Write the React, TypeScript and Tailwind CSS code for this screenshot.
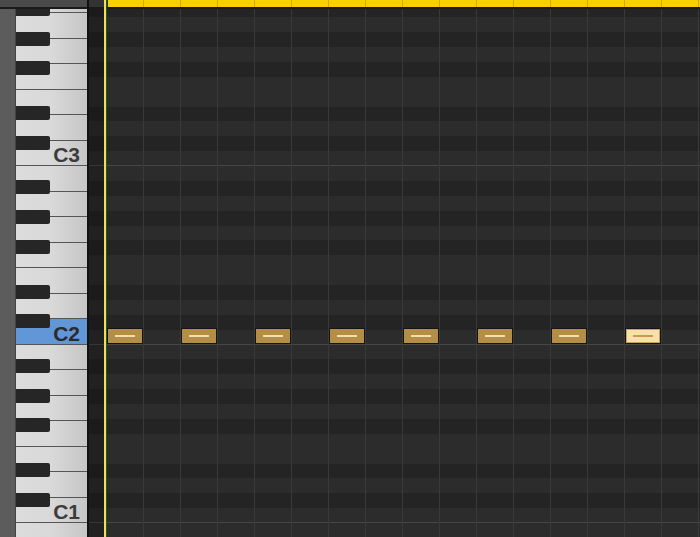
import clsx from "clsx";

const NAMES = ["B", "A#", "A", "G#", "G", "F#", "F", "E", "D#", "D", "C#", "C"];
const OCTAVES = [3, 2, 1, 0];
const SEMI = 14.875;
const WHITES = ["B", "A", "G", "F", "E", "D", "C"];
const BLACK_IDX = [1, 3, 5, 8, 10];

const isBlack = (n: string) => n.includes("#");

const Octave = ({ octave }: { octave: number }) => {
  return (
    <div className="relative h-[178.5px] shrink-0">
      <div className="flex flex-col">
        {WHITES.map((w) => {
          const isC = w === "C";
          const active = isC && octave === 2;
          return (
            <div
              key={w}
              className={clsx(
                "h-[25.5px] shrink-0 border-b border-[#555] flex items-end justify-end pr-[7px]",
                active
                  ? "bg-[#6197d7]"
                  : "bg-gradient-to-r from-[#dcdcdc] via-[#d9d9d9] to-[#c6c6c6]"
              )}
            >
              {isC && octave > 0 && (
                <span
                  className={clsx(
                    "text-[21px] font-bold leading-none",
                    active ? "text-[#2a2a2a]" : "text-[#3c3c3c]"
                  )}
                >
                  C{octave}
                </span>
              )}
            </div>
          );
        })}
      </div>
      {BLACK_IDX.map((i) => (
        <div
          key={i}
          className="absolute left-0 w-[34px] h-[14px] bg-[#262626] rounded-r-[2px]"
          style={{ top: i * SEMI - 0.5 }}
        />
      ))}
    </div>
  );
};

const Note = ({ selected }: { selected?: boolean }) => {
  return (
    <div
      className={clsx(
        "relative z-10 -mt-[2px] h-[16px] w-[36px] shrink-0 border-[1.5px] border-[#141414] flex items-center justify-center",
        selected ? "bg-[#f7e1ab] shadow-[inset_0_0_0_1px_#c8a25a]" : "bg-[#b48e47]"
      )}
    >
      <div className={clsx("h-[2px] w-[20px]", selected ? "bg-[#c39d52]" : "bg-[#f2dea8]")} />
    </div>
  );
};

export default function App() {
  return (
    <div className="relative w-[700px] h-[537px] overflow-hidden bg-[#2a2a2a] flex flex-col font-['Liberation_Sans',Arial,sans-serif]">
      {/* top ruler */}
      <div className="flex h-[9px] shrink-0">
        <div className="w-[87px] bg-[#4a4a4a] border-b-2 border-[#1a1a1a]" />
        <div className="w-[2px] bg-[#111]" />
        <div className="w-[19px] bg-[#333] border-b-2 border-[#1a1a1a]" />
        <div className="flex-1 flex bg-[#fccf00] border-b-2 border-[#1a1a1a] overflow-hidden">
          <div className="w-[35px] shrink-0" />
          {Array.from({ length: 16 }).map((_, i) => (
            <div key={i} className="w-[37px] shrink-0 border-l border-[#cfa800]" />
          ))}
        </div>
      </div>

      <div className="flex flex-1 overflow-hidden">
        <div className="w-[16px] shrink-0 bg-[#5c5c5c] border-r border-[#444]" />

        {/* piano keys */}
        <div className="w-[71px] shrink-0 overflow-hidden">
          <div className="-mt-[21.5px] flex flex-col">
            {OCTAVES.map((o) => (
              <Octave key={o} octave={o} />
            ))}
          </div>
        </div>

        <div className="w-[2px] shrink-0 bg-[#111]" />

        {/* note grid */}
        <div className="relative flex-1 overflow-hidden">
          <div className="-mt-[21.5px] flex flex-col">
            {OCTAVES.map((o) =>
              NAMES.map((n) => (
                <div
                  key={`${n}${o}`}
                  className={clsx(
                    "h-[14.875px] shrink-0 flex",
                    isBlack(n) ? "bg-[#242424]" : "bg-[#2c2c2c]",
                    n === "C" && "border-b border-[#474747]"
                  )}
                >
                  {n === "C" && o === 2 && (
                    <div className="flex pl-[18px] gap-[38px]">
                      {Array.from({ length: 8 }).map((_, i) => (
                        <Note key={i} selected={i === 7} />
                      ))}
                    </div>
                  )}
                </div>
              ))
            )}
          </div>

          {/* bar lines */}
          <div className="absolute inset-0 flex pointer-events-none">
            <div className="w-[17px] shrink-0 bg-black/25" />
            {Array.from({ length: 17 }).map((_, i) => (
              <div key={i} className="w-[37px] shrink-0 border-l border-[#393939]" />
            ))}
          </div>
        </div>
      </div>

      {/* playhead */}
      <div className="absolute top-0 bottom-0 left-[104px] flex z-20">
        <div className="w-[2px] bg-[#f3dc5a]" />
        <div className="w-[1px] bg-[#1f5b25]" />
      </div>
    </div>
  );
}
